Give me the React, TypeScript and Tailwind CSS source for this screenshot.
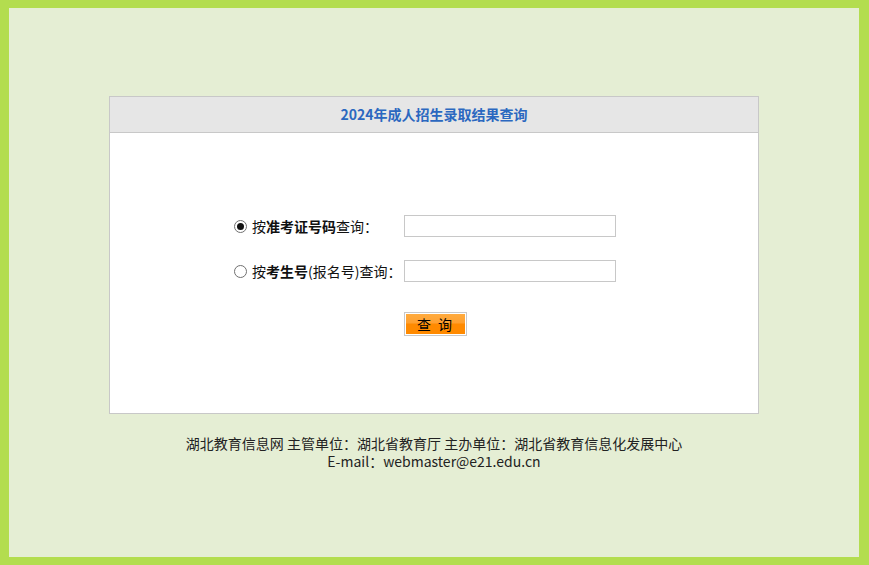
const font = { fontFamily: '"Microsoft YaHei", "Noto Sans CJK SC", "Noto Sans", sans-serif' };

function Radio({ checked }: { checked?: boolean }) {
  return (
    <span className="flex h-[13px] w-[13px] shrink-0 items-center justify-center rounded-full border border-[#707070] bg-white">
      {checked && <span className="h-[7px] w-[7px] rounded-full bg-[#111]" />}
    </span>
  );
}

function Row({ checked, label }: { checked?: boolean; label: React.ReactNode }) {
  return (
    <div className="flex h-[22px] items-center">
      <div className="flex w-[170px] items-center gap-[5px] text-[14px] text-[#111]">
        <Radio checked={checked} />
        <span className="leading-none">{label}</span>
      </div>
      <div className="h-[22px] w-[212px] border border-[#c8c8c8] bg-white" />
    </div>
  );
}

export default function App() {
  return (
    <div
      className="box-border h-[565px] w-[869px] border-t-[8px] border-r-[10px] border-b-[8px] border-l-[9px] border-[#b3dd4f] bg-[#e5eed4]"
      style={font}
    >
      <div className="pt-[88px]">
        <div className="ml-[100px] w-[650px] border border-[#c8c8c8] bg-white">
          <div className="flex h-[36px] items-center justify-center border-b border-[#c8c8c8] bg-[#e6e6e6] text-[14px] font-bold text-[#2b68c0]">
            2024年成人招生录取结果查询
          </div>
          <div className="flex h-[280px] flex-col pt-[82px] pl-[124px]">
            <Row
              checked
              label={
                <>
                  按<b>准考证号码</b>查询：
                </>
              }
            />
            <div className="h-[23px]" />
            <Row
              label={
                <>
                  按<b>考生号</b>(报名号)查询：
                </>
              }
            />
            <div className="pl-[170px] pt-[30px]">
              <div className="h-[24px] w-[63px] border border-[#c8c8c8] bg-white p-px">
                <div className="flex h-full w-full items-center justify-center bg-[linear-gradient(#ffab3e_0%,#ffa030_45%,#ff8a00_50%,#ff8a00_100%)] text-[14px] leading-none tracking-[2px] text-black">
                  查 询
                </div>
              </div>
            </div>
          </div>
        </div>
        <p className="ml-[100px] w-[650px] pt-[20px] text-center text-[14px] leading-[18px] text-[#222]">
          湖北教育信息网 主管单位：湖北省教育厅 主办单位：湖北省教育信息化发展中心
          <br />
          E-mail：webmaster@e21.edu.cn
        </p>
      </div>
    </div>
  );
}
